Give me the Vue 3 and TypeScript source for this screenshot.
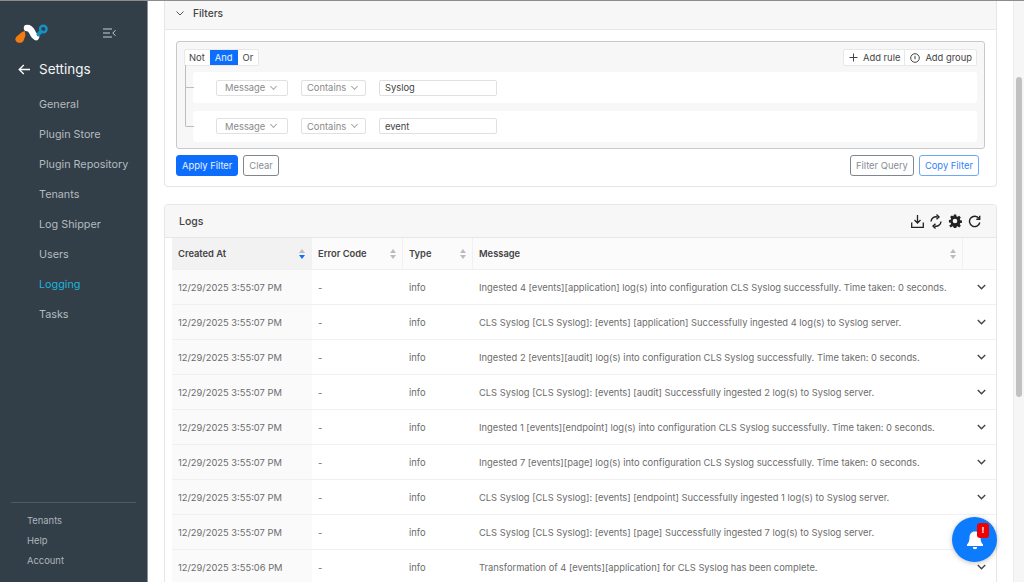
<template>
  <div class="layout">
    <aside class="sidebar">
      <div class="brand">
        <svg class="logo" width="33" height="20" viewBox="0 0 33 20">
          <path d="M0.300 16.500 C0.300 14 3 12.500 5 10.800 C6.500 9.500 7.800 8.300 9.800 8 L10.500 12.500 C9.800 13.800 9.600 15 9 16.500 A4.500 4.500 0 0 1 0.300 16.500 Z" fill="#f47b10" />
          <path d="M12 5 C15 5 16.200 7 17.200 9 C18 10.800 19 13 21 14" fill="none" stroke="#fff" stroke-width="6.500" stroke-linecap="round" />
          <path d="M23.300 11.500 L25.800 8.500" stroke="#1591c4" stroke-width="3.600" stroke-linecap="round" />
          <circle cx="28.300" cy="6" r="3.300" fill="none" stroke="#1591c4" stroke-width="2.400" />
        </svg>
        <svg class="collapse" width="13" height="10" viewBox="0 0 13 10" fill="none" stroke="#c9ced2" stroke-width="1">
          <path d="M0 1h9M0 5h7M0 9h9M12.500 2.200 9.800 5l2.700 2.800" />
        </svg>
      </div>
      <div class="section-title">
        <svg width="12" height="11" viewBox="0 0 12 11" fill="none" stroke="#fff" stroke-width="1.300">
          <path d="M12 5.500H1.200M5.800 1 1.200 5.500 5.800 10" />
        </svg>
        <span>Settings</span>
      </div>
      <nav class="nav">
        <a v-for="item in navItems" :key="item" class="nav-item" :class="{ active: item === 'Logging' }">{{ item }}</a>
      </nav>
      <div class="side-footer">
        <a v-for="item in footerItems" :key="item" class="footer-item">{{ item }}</a>
      </div>
    </aside>

    <main class="main">
      <div class="content">
        <section class="card filters">
          <header class="filters-head">
            <svg width="8" height="5" viewBox="0 0 8 5" fill="none" stroke="#555" stroke-width="1">
              <path d="M.5.5 4 4 7.500.5" />
            </svg>
            <span>Filters</span>
          </header>
          <div class="filters-body">
            <div class="query">
              <div class="query-top">
                <div class="btn-group">
                  <button class="seg">Not</button>
                  <button class="seg on">And</button>
                  <button class="seg">Or</button>
                </div>
                <div class="btn-group">
                  <button class="seg add">
                    <svg width="9" height="9" viewBox="0 0 9 9" stroke="#444" stroke-width="1"><path d="M4.500.5v8M.5 4.500h8" /></svg>
                    Add rule
                  </button>
                  <button class="seg add group">
                    <svg width="10" height="10" viewBox="0 0 10 10" fill="none" stroke="#444" stroke-width="1"><circle cx="5" cy="5" r="4.300" /><path d="M5 2.800v3.500" /></svg>
                    Add group
                  </button>
                </div>
              </div>
              <div class="rules">
                <div v-for="rule in rules" :key="rule.value" class="rule">
                  <div class="select field-select">Message<i class="caret" /></div>
                  <div class="select op-select">Contains<i class="caret" /></div>
                  <div class="value">{{ rule.value }}</div>
                </div>
              </div>
            </div>
            <div class="actions">
              <button class="btn primary">Apply Filter</button>
              <button class="btn ghost">Clear</button>
              <span class="spacer" />
              <button class="btn ghost">Filter Query</button>
              <button class="btn outline">Copy Filter</button>
            </div>
          </div>
        </section>

        <section class="card logs">
          <header class="logs-head">
            <span>Logs</span>
            <div class="tools">
              <svg width="13" height="13" viewBox="0 0 13 13" fill="none" stroke="#222" stroke-width="1.300">
                <path d="M6.500 0v8M3.500 5 6.500 8l3-3M.7 7.500v4.800h11.600V7.500" />
              </svg>
              <svg width="12" height="15" viewBox="0 0 12 15" fill="none" stroke="#222" stroke-width="1.400">
                <path d="M1 7.500A5 5 0 0 1 7.500 3M11 7.500A5 5 0 0 1 4.500 12" />
                <path d="M6.500 .5 9 3 6.500 5.300M5.500 9.700 3 12 5.500 14.500" />
              </svg>
              <svg width="14" height="14" viewBox="0 0 24 24" fill="#222">
                <path d="M10 1h4l.6 3.100 2 .8 2.600-1.800 2.800 2.800-1.800 2.600.8 2 3 .5v4l-3 .6-.8 2 1.800 2.600-2.800 2.800-2.600-1.800-2 .8-.6 3h-4l-.6-3-2-.8-2.600 1.800-2.800-2.800L5.400 17l-.8-2-3-.6v-4l3-.5.8-2-1.800-2.600 2.800-2.800L9 3.900l.4-.1.600-2.800ZM12 8a4 4 0 1 0 0 8 4 4 0 0 0 0-8Z" fill-rule="evenodd" />
              </svg>
              <svg width="13" height="13" viewBox="0 0 13 13" fill="none" stroke="#222" stroke-width="1.400">
                <path d="M11 3.500A5.200 5.200 0 1 0 11.800 7.500" />
                <path d="M11.700.8v3.400H8.300" />
              </svg>
            </div>
          </header>
          <div class="table">
            <div class="row head">
              <div v-for="col in columns" :key="col.label" class="cell" :class="col.cls">
                <span>{{ col.label }}</span>
                <svg width="6" height="10" viewBox="0 0 6 10">
                  <path d="M3 0l3 4H0z" fill="#bbb" />
                  <path d="M3 10 0 6h6z" :fill="col.sorted ? '#0d6efd' : '#bbb'" />
                </svg>
              </div>
              <div class="cell c-more" />
            </div>
            <div v-for="(log, i) in logs" :key="i" class="row">
              <div class="cell c-date">{{ log.date }}</div>
              <div class="cell c-code">-</div>
              <div class="cell c-type">info</div>
              <div class="cell c-msg">{{ log.message }}</div>
              <div class="cell c-more">
                <svg width="9" height="6" viewBox="0 0 9 6" fill="none" stroke="#444" stroke-width="1.400">
                  <path d="M.8 1l3.700 3.700L8.200 1" />
                </svg>
              </div>
            </div>
          </div>
        </section>
      </div>
      <div class="scrollbar"><div class="thumb" /></div>

      <button class="bell">
        <svg width="18" height="20" viewBox="0 0 18 20" fill="#fff">
          <path d="M9 1.500c-3.500 0-5.500 2.600-5.500 6 0 3.400-.9 5.300-2.500 7.100V16h16v-1.400c-1.600-1.800-2.500-3.700-2.500-7.100 0-3.400-2-6-5.500-6ZM6.800 17a2.200 2.200 0 0 0 4.400 0Z" />
        </svg>
        <span class="badge">!</span>
      </button>
    </main>
  </div>
</template>

<script setup lang="ts">
interface LogRow {
  date: string
  message: string
}

const navItems = ['General', 'Plugin Store', 'Plugin Repository', 'Tenants', 'Log Shipper', 'Users', 'Logging', 'Tasks']
const footerItems = ['Tenants', 'Help', 'Account']
const rules = [{ value: 'Syslog' }, { value: 'event' }]

const columns = [
  { label: 'Created At', cls: 'c-date', sorted: true },
  { label: 'Error Code', cls: 'c-code', sorted: false },
  { label: 'Type', cls: 'c-type', sorted: false },
  { label: 'Message', cls: 'c-msg', sorted: false },
]

const logs: LogRow[] = [
  { date: '12/29/2025 3:55:07 PM', message: 'Ingested 4 [events][application] log(s) into configuration CLS Syslog successfully. Time taken: 0 seconds.' },
  { date: '12/29/2025 3:55:07 PM', message: 'CLS Syslog [CLS Syslog]: [events] [application] Successfully ingested 4 log(s) to Syslog server.' },
  { date: '12/29/2025 3:55:07 PM', message: 'Ingested 2 [events][audit] log(s) into configuration CLS Syslog successfully. Time taken: 0 seconds.' },
  { date: '12/29/2025 3:55:07 PM', message: 'CLS Syslog [CLS Syslog]: [events] [audit] Successfully ingested 2 log(s) to Syslog server.' },
  { date: '12/29/2025 3:55:07 PM', message: 'Ingested 1 [events][endpoint] log(s) into configuration CLS Syslog successfully. Time taken: 0 seconds.' },
  { date: '12/29/2025 3:55:07 PM', message: 'Ingested 7 [events][page] log(s) into configuration CLS Syslog successfully. Time taken: 0 seconds.' },
  { date: '12/29/2025 3:55:07 PM', message: 'CLS Syslog [CLS Syslog]: [events] [endpoint] Successfully ingested 1 log(s) to Syslog server.' },
  { date: '12/29/2025 3:55:07 PM', message: 'CLS Syslog [CLS Syslog]: [events] [page] Successfully ingested 7 log(s) to Syslog server.' },
  { date: '12/29/2025 3:55:06 PM', message: 'Transformation of 4 [events][application] for CLS Syslog has been complete.' },
]
</script>

<style scoped>
.layout {
  display: flex;
  height: 582px;
  overflow: hidden;
  box-sizing: border-box;
  border-top: 1px solid #8d8d8d;
  font-family: Inter, "Liberation Sans", sans-serif;
  color: #555;
  background: #fff;
}

.sidebar {
  width: 148px;
  flex: none;
  display: flex;
  flex-direction: column;
  background: #323f49;
  border-right: 1px solid #8b9399;
  box-sizing: border-box;
}

.brand {
  display: flex;
  align-items: center;
  justify-content: space-between;
  padding: 21px 31px 0 15px;
  height: 42px;
  box-sizing: border-box;
}

.section-title {
  display: flex;
  align-items: center;
  gap: 9px;
  margin-top: 16px;
  padding-left: 18px;
  height: 20px;
  font-size: 13.500px;
  color: #f2f4f5;
}

.nav {
  display: flex;
  flex-direction: column;
  margin-top: 10.500px;
  padding-left: 39px;
}

.nav-item {
  height: 30.100px;
  line-height: 30px;
  font-size: 10.800px;
  color: #b4babf;
}

.nav-item.active {
  color: #1eb2dc;
}

.side-footer {
  margin: auto 11px 0;
  padding: 8px 0 11px 16px;
  border-top: 1px solid #4d5a64;
  display: flex;
  flex-direction: column;
}

.footer-item {
  height: 20px;
  line-height: 20px;
  font-size: 9.400px;
  color: #aeb5ba;
}

.main {
  flex: 1;
  min-width: 0;
  display: flex;
  position: relative;
}

.content {
  flex: 1;
  min-width: 0;
  padding: 0 16px;
  display: flex;
  flex-direction: column;
  gap: 17px;
}

.scrollbar {
  width: 11px;
  flex: none;
  background: #f6f6f6;
  border-left: 1px solid #ececec;
  box-sizing: border-box;
  padding: 76px 2px 0;
}

.thumb {
  height: 320px;
  background: #c1c1c1;
  border-radius: 3px;
}

.card {
  flex: none;
  border: 1px solid #e6e6e6;
  border-radius: 4px;
  background: #fff;
}

.filters {
  border-top: none;
  border-top-left-radius: 0;
  border-top-right-radius: 0;
}

.filters-head {
  height: 29px;
  display: flex;
  align-items: center;
  gap: 9px;
  padding: 0 0 4px 11px;
  box-sizing: border-box;
  background: #f7f7f7;
  border-bottom: 1px solid #e8e8e8;
  font-size: 10.200px;
  font-weight: 500;
  color: #444;
}

.filters-body {
  padding: 11px 11px 10px;
}

.query {
  border: 1px solid #c9c9c9;
  border-radius: 3px;
  background: #f7f7f7;
  padding: 7px;
  height: 108px;
  box-sizing: border-box;
}

.query-top {
  display: flex;
  justify-content: space-between;
}

.btn-group {
  display: flex;
  background: #fff;
  border: 1px solid #e8e8e8;
  border-radius: 2px;
}

.seg {
  border: none;
  background: none;
  font: inherit;
  font-size: 9.400px;
  color: #444;
  height: 15px;
  padding: 0 5px;
  display: flex;
  align-items: center;
  gap: 5px;
}

.seg:first-child {
  padding-left: 4px;
}

.seg.on {
  background: #0d6efd;
  color: #eaf2ff;
}

.seg.add {
  padding: 0 4px 0 5px;
}

.seg.group {
  gap: 5px;
  border-left: 1px solid #e8e8e8;
}

.rules {
  position: relative;
  margin-top: 6px;
  padding-left: 9px;
  display: flex;
  flex-direction: column;
  gap: 7.500px;
}

.rule {
  position: relative;
  height: 31px;
  display: flex;
  align-items: center;
  gap: 13px;
  padding-left: 23px;
  background: #fff;
  border-radius: 3px;
}

/* tree lines of the query builder */
.rule::before {
  content: '';
  position: absolute;
  left: -8px;
  top: -7px;
  width: 8px;
  height: 22px;
  border-left: 1px solid #bdbdbd;
  border-bottom: 1px solid #bdbdbd;
}

.rule + .rule::before {
  top: -24px;
  height: 39px;
  border-bottom-left-radius: 2px;
}

.select,
.value {
  height: 16px;
  box-sizing: border-box;
  border: 1px solid #e0e0e0;
  border-radius: 2px;
  font-size: 9.400px;
  display: flex;
  align-items: center;
  background: #fff;
}

.select {
  color: #8a8a8a;
  gap: 6px;
}

.field-select {
  width: 72px;
  padding-left: 8px;
}

.op-select {
  width: 65px;
  padding-left: 5px;
}

.value {
  width: 118px;
  padding-left: 5px;
  color: #444;
}

.caret {
  width: 4px;
  height: 4px;
  margin-top: -3px;
  border-right: 1px solid #aaa;
  border-bottom: 1px solid #aaa;
  transform: rotate(45deg);
}

.actions {
  display: flex;
  gap: 5px;
  margin-top: 6px;
  padding-right: 6px;
}

.spacer {
  flex: 1;
}

.btn {
  height: 21px;
  padding: 0 5px;
  box-sizing: border-box;
  font: inherit;
  font-size: 9.400px;
  border-radius: 3px;
  background: #fff;
}

.btn.primary {
  background: #0d6efd;
  border: 1px solid #0d6efd;
  color: #e8f1ff;
}

.btn.ghost {
  border: 1px solid #7d8790;
  color: #858d95;
}

.btn.outline {
  border: 1px solid #6ea8fe;
  color: #2f83fd;
}

.logs-head {
  height: 33px;
  display: flex;
  align-items: center;
  justify-content: space-between;
  padding: 0 15px 0 14px;
  box-sizing: border-box;
  background: #f7f7f7;
  border-bottom: 1px solid #e6e6e6;
  font-size: 10.500px;
  font-weight: 500;
  color: #444;
  border-radius: 4px 4px 0 0;
}

.tools {
  display: flex;
  align-items: center;
  gap: 6px;
}

.table {
  padding-left: 7px;
}

.row {
  display: flex;
  height: 35px;
  border-bottom: 1px solid #f0f0f0;
  box-sizing: border-box;
  font-size: 9.350px;
  color: #6c6c6c;
}

.row.head {
  height: 32px;
  color: #444;
  font-weight: 600;
  background: #fbfbfb;
}

.cell {
  display: flex;
  align-items: center;
  justify-content: space-between;
  box-sizing: border-box;
  padding: 0 6px;
}

.head .cell {
  border-right: 1px solid #f1f1f1;
}

.c-date {
  width: 140px;
  background: #fafafa;
}

.head .c-date {
  background: #f2f2f2;
}

.c-code {
  width: 91px;
}

.c-type {
  width: 70px;
}

.c-msg {
  flex: 1;
  min-width: 0;
  white-space: nowrap;
  justify-content: space-between;
}

.c-more {
  width: 33px;
  flex: none;
  justify-content: center;
  padding-left: 3px;
  padding-right: 0;
}

.head .c-more {
  border-right: none;
}

.bell {
  position: absolute;
  right: 27px;
  bottom: 20px;
  width: 45px;
  height: 45px;
  padding: 0;
  border: none;
  border-radius: 50%;
  background: #0d7bfd;
  box-shadow: 0 1px 5px rgba(0, 0, 0, 0.25);
  display: flex;
  align-items: center;
  justify-content: center;
}

.badge {
  position: absolute;
  top: 6px;
  right: 8px;
  width: 12px;
  height: 15px;
  border-radius: 3px;
  background: #f00000;
  color: #fff;
  font-size: 9px;
  font-weight: 700;
  line-height: 15px;
  text-align: center;
}
</style>
